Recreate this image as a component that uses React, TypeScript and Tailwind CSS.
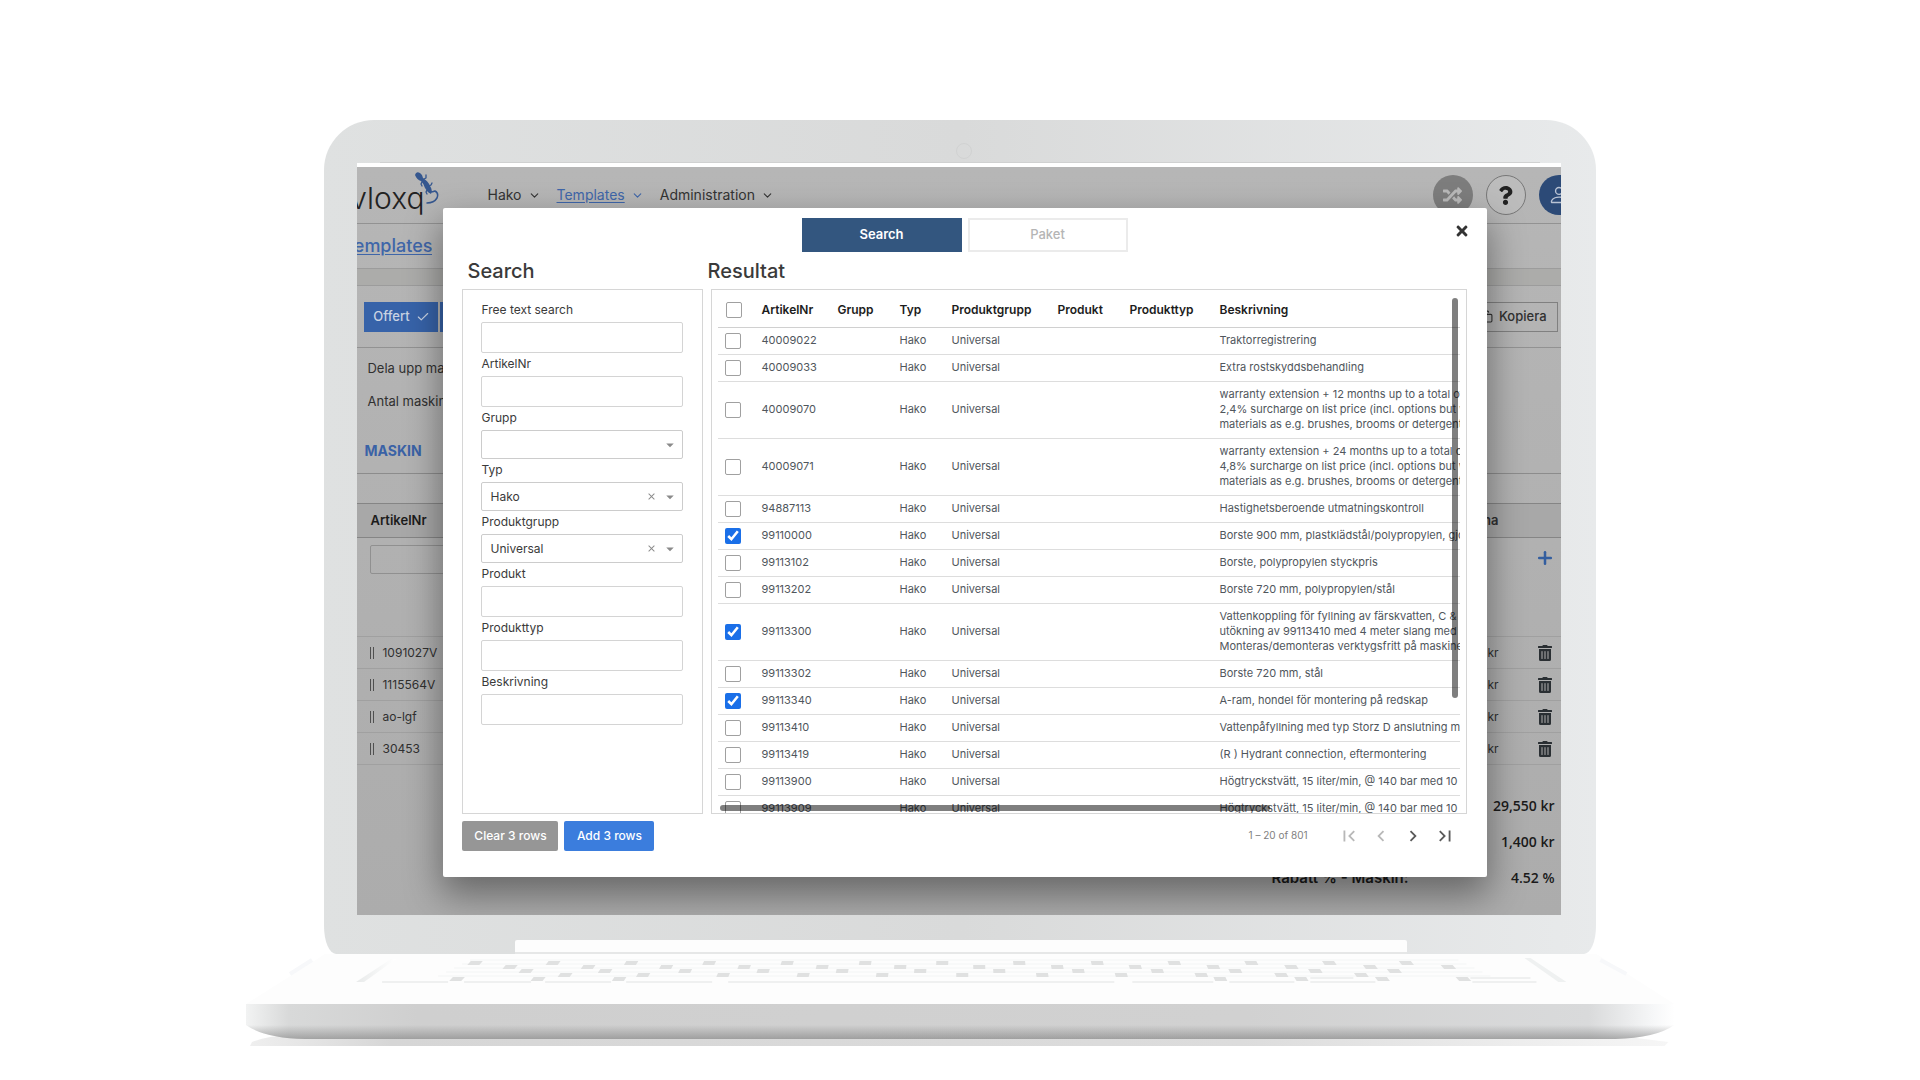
import { useState } from "react";
import type { ReactNode } from "react";
import { Check, ChevronDown, Copy, Plus } from "lucide-react";
import { FaQuestion, FaRandom, FaTimes, FaTrashAlt } from "react-icons/fa";
import { BsPerson } from "react-icons/bs";
import { MdArrowDropDown, MdChevronLeft, MdChevronRight, MdClose, MdFirstPage, MdLastPage } from "react-icons/md";

type Article = { nr: string; text: string[] };

const articles: Article[] = [
  { nr: "40009022", text: ["Traktorregistrering"] },
  { nr: "40009033", text: ["Extra rostskyddsbehandling"] },
  {
    nr: "40009070",
    text: [
      "warranty extension + 12 months up to a total of",
      "2,4% surcharge on list price (incl. options but w/o",
      "materials as e.g. brushes, brooms or detergents",
    ],
  },
  {
    nr: "40009071",
    text: [
      "warranty extension + 24 months up to a total of",
      "4,8% surcharge on list price (incl. options but w/o",
      "materials as e.g. brushes, brooms or detergents",
    ],
  },
  { nr: "94887113", text: ["Hastighetsberoende utmatningskontroll"] },
  { nr: "99110000", text: ["Borste 900 mm, plastklädstål/polypropylen, gjord"] },
  { nr: "99113102", text: ["Borste, polypropylen styckpris"] },
  { nr: "99113202", text: ["Borste 720 mm, polypropylen/stål"] },
  {
    nr: "99113300",
    text: [
      "Vattenkoppling för fyllning av färskvatten, C & D",
      "utökning av 99113410 med 4 meter slang med 2",
      "Monteras/demonteras verktygsfritt på maskinen",
    ],
  },
  { nr: "99113302", text: ["Borste 720 mm, stål"] },
  { nr: "99113340", text: ["A-ram, hondel för montering på redskap"] },
  { nr: "99113410", text: ["Vattenpåfyllning med typ Storz D anslutning med"] },
  { nr: "99113419", text: ["(R ) Hydrant connection, eftermontering"] },
  { nr: "99113900", text: ["Högtryckstvätt, 15 liter/min, @ 140 bar med 10 m"] },
  { nr: "99113909", text: ["Högtryckstvätt, 15 liter/min, @ 140 bar med 10 m"] },
];

const machineRows = ["1091027V", "1115564V", "ao-lgf", "30453"];

// Dark gaps between the keys, one list of x positions per keyboard row
const keyRows = [
  { y: 961, xs: [475, 553, 631, 709, 787, 865, 942, 1019, 1097, 1174, 1251, 1329, 1406] },
  { y: 965, xs: [510, 588, 666, 744, 822, 900, 979, 1057, 1135, 1213, 1291, 1370, 1448] },
  { y: 969, xs: [526, 605, 685, 763, 842, 920, 999, 1078, 1157, 1235, 1315, 1394] },
  { y: 973, xs: [565, 643, 723, 803, 882, 962, 1042, 1121, 1201, 1281, 1361] },
  { y: 977, xs: [457, 538, 619, 1220, 1301, 1382, 1463] },
];

function Gecko() {
  return (
    <svg viewBox="0 0 24 34" className="absolute right-0 top-0 h-[34px] w-6 text-[#35578f]" fill="none" stroke="currentColor" strokeLinecap="round" strokeLinejoin="round">
      <path d="M0 3 Q1 -1 5 1 Q8 3 8 6 Q13 9 15 14 Q18 18 16 22 Q12 20 10 16 Q9 12 6 9 Q2 8 0 3Z" fill="currentColor" stroke="none" />
      <path d="M15 20 Q18 20 20 19 Q24 21 22 26 Q19 31 12 31" strokeWidth="1.5" />
      <path d="M9 7 L11 6 L11 3 M7 10 L6 12 L7 14 M14 14 L16 13 L17 11 M12 18 L11 20 L12 22" strokeWidth="1.3" />
    </svg>
  );
}

function NavItem({ label, active }: { label: string; active?: boolean }) {
  return (
    <a href="#" className={active ? "flex items-center gap-1.5 text-[#3f66a9]" : "flex items-center gap-1.5 text-[#333333]"}>
      <span className={active ? "underline underline-offset-2" : ""}>{label}</span>
      <ChevronDown size={13} />
    </a>
  );
}

function TextField({ id, label }: { id: string; label: string }) {
  return (
    <div>
      <label htmlFor={id} className="block h-[23px] leading-[21px]">{label}</label>
      <input id={id} type="text" className="block h-[31px] w-full rounded-xs border border-[#d4d4d4] bg-white px-2 outline-none" />
    </div>
  );
}

function SelectField({ id, label, value }: { id: string; label: string; value?: string }) {
  return (
    <div>
      <label htmlFor={id} className="block h-[23px] leading-[21px]">{label}</label>
      <div className="relative">
        <select id={id} defaultValue={value ?? ""} className="block h-[29px] w-full appearance-none rounded-xs border border-[#cccccc] bg-white px-2 outline-none">
          <option value={value ?? ""}>{value ?? ""}</option>
        </select>
        <div className="pointer-events-none absolute inset-y-0 right-1 flex items-center gap-1 text-[#8a8a8a]">
          {value && <MdClose size={11} />}
          <MdArrowDropDown size={18} />
        </div>
      </div>
    </div>
  );
}

function Tick({ label, checked, onChange }: { label: string; checked: boolean; onChange: () => void }) {
  return (
    <input
      type="checkbox"
      aria-label={label}
      checked={checked}
      onChange={onChange}
      className="block size-4 appearance-none rounded-xs border border-[#a0a0a0] bg-white accent-[#1a6fe8] checked:appearance-auto"
    />
  );
}

function Th({ children }: { children?: ReactNode }) {
  return <th className="p-0 pt-1 text-left font-semibold text-[#1c1c1c]">{children}</th>;
}

function ResultTable({ selected, toggle }: { selected: string[]; toggle: (nr: string) => void }) {
  return (
    <div className="relative min-w-0 flex-1 overflow-hidden border border-[#d6d6d6] px-1.5">
      <div className="h-[523px] overflow-hidden">
        <table className="w-full table-fixed border-collapse whitespace-nowrap">
          <colgroup>
            <col className="w-[43px]" />
            <col className="w-[76px]" />
            <col className="w-[62px]" />
            <col className="w-[52px]" />
            <col className="w-[106px]" />
            <col className="w-[72px]" />
            <col className="w-[90px]" />
            <col />
          </colgroup>
          <thead>
            <tr className="h-[37px] border-b border-[#d0d0d0] text-xs">
              <th className="p-0 pl-2 pt-[3px]"><Tick label="Alla" checked={false} onChange={() => {}} /></th>
              <Th>ArtikelNr</Th>
              <Th>Grupp</Th>
              <Th>Typ</Th>
              <Th>Produktgrupp</Th>
              <Th>Produkt</Th>
              <Th>Produkttyp</Th>
              <Th>Beskrivning</Th>
            </tr>
          </thead>
          <tbody className="text-[11px] leading-[15px] text-[#50565c]">
            {articles.map((a) => (
              <tr key={a.nr} className={a.text.length > 1 ? "h-[57px] border-b border-[#dddddd]" : "h-[27px] border-b border-[#dddddd]"}>
                <td className="p-0 pl-[7px]">
                  <Tick label={a.nr} checked={selected.includes(a.nr)} onChange={() => toggle(a.nr)} />
                </td>
                <td className="p-0">{a.nr}</td>
                <td className="p-0" />
                <td className="p-0">Hako</td>
                <td className="p-0">Universal</td>
                <td className="p-0" />
                <td className="p-0" />
                <td className="overflow-hidden p-0">
                  {a.text.map((line) => <div key={line}>{line}</div>)}
                </td>
              </tr>
            ))}
          </tbody>
        </table>
      </div>
      {/* overlay scrollbars */}
      <div className="absolute right-2 top-2 h-[400px] w-1.5 rounded-full bg-black/50" />
      <div className="absolute bottom-0.5 left-2 h-1.5 w-[73%] rounded-full bg-black/50" />
    </div>
  );
}

function ArticleDialog() {
  const [selected, setSelected] = useState(["99110000", "99113300", "99113340"]);
  const toggle = (nr: string) =>
    setSelected((old) => (old.includes(nr) ? old.filter((n) => n !== nr) : [...old, nr]));

  return (
    <div role="dialog" className="relative w-full rounded-xs bg-white pb-[26px] pl-[19px] pr-5 pt-2.5 text-xs text-[#3a3a3a] shadow-[0_16px_36px_2px_rgba(0,0,0,0.4)]">
      <button aria-label="Close" className="absolute right-[17px] top-[15px] text-[#333333]">
        <FaTimes size={16} />
      </button>

      <div className="flex justify-center gap-1.5">
        <button className="h-[34px] w-40 bg-[#33567f] text-[13px] font-semibold text-white">Search</button>
        <button className="h-[34px] w-40 border-2 border-[#ebebeb] bg-white text-[13px] font-medium text-[#b5b5b5]">Paket</button>
      </div>

      <div className="flex h-[37px] items-center text-xl font-medium">
        <h2 className="w-[245px] pl-[5px]">Search</h2>
        <h2>Resultat</h2>
      </div>

      <div className="flex gap-2">
        <form className="w-[241px] shrink-0 border border-[#d6d6d6] pl-[18px] pr-[19px] pt-[9px]">
          <TextField id="free" label="Free text search" />
          <TextField id="nr" label="ArtikelNr" />
          <SelectField id="grupp" label="Grupp" />
          <SelectField id="typ" label="Typ" value="Hako" />
          <SelectField id="pgrupp" label="Produktgrupp" value="Universal" />
          <TextField id="produkt" label="Produkt" />
          <TextField id="ptyp" label="Produkttyp" />
          <TextField id="beskr" label="Beskrivning" />
        </form>
        <ResultTable selected={selected} toggle={toggle} />
      </div>

      <div className="flex items-center gap-1.5 pt-[7px]">
        <button className="h-[30px] w-24 rounded-xs bg-[#969696] font-medium text-white" onClick={() => setSelected([])}>
          Clear {selected.length} rows
        </button>
        <button className="h-[30px] w-[90px] rounded-xs bg-[#3b7ddd] font-medium text-white">Add {selected.length} rows</button>
        <div className="ml-auto flex items-center pr-[11px] text-[#5a5a5a]">
          <span className="mr-[30px] text-[10px] text-[#808080]">1 – 20 of 801</span>
          <div className="flex gap-2.5">
            <button aria-label="First page" className="text-[#b8b8b8]"><MdFirstPage size={22} /></button>
            <button aria-label="Previous page" className="text-[#b8b8b8]"><MdChevronLeft size={22} /></button>
            <button aria-label="Next page"><MdChevronRight size={22} /></button>
            <button aria-label="Last page"><MdLastPage size={22} /></button>
          </div>
        </div>
      </div>
    </div>
  );
}

// The quote page that lies dimmed behind the dialog
function QuotePage() {
  return (
    <div className="bg-linear-to-b from-[#b6b6b6] to-[#acacac] text-[13px] text-[#303030]">
      <header className="flex h-[57px] items-center overflow-hidden border-b border-[#929292]">
        <div className="relative h-[46px] w-[82px]">
          <div className="flex h-full w-[67px] justify-end overflow-hidden pt-1.5 text-[30px] font-light leading-[40px] text-[#222222]">
            <span>vloxq</span>
          </div>
          <Gecko />
        </div>
        <nav className="ml-12 flex gap-4 text-sm">
          <NavItem label="Hako" />
          <NavItem label="Templates" active />
          <NavItem label="Administration" />
        </nav>
        <div className="-mr-[18px] ml-auto flex gap-[13px]">
          <button aria-label="Switch" className="flex size-10 items-center justify-center rounded-full bg-[#7d7d7d] text-[#b9b9b9]"><FaRandom size={19} /></button>
          <button aria-label="Help" className="flex size-10 items-center justify-center rounded-full border border-[#777777] bg-[#bcbcbc] text-[#222222]"><FaQuestion size={19} /></button>
          <button aria-label="Account" className="flex size-10 items-center justify-center rounded-full bg-[#2c4a77] text-[#b9c3d4]"><BsPerson size={22} /></button>
        </div>
      </header>
      <div className="flex h-[44px] w-[75px] items-center justify-end overflow-hidden text-lg font-medium text-[#3f66a9] underline underline-offset-2">
        <a href="#">Templates</a>
      </div>
      <div className="h-[18px] border-y border-[#9c9c9c] bg-[#acacaa]" />
      <div className="flex h-[62px] items-center justify-between border-b border-[#929292] pl-[7px] pr-[3px]">
        <div className="flex gap-0.5">
          <button className="flex h-[30px] w-[74px] items-center justify-center gap-1.5 bg-[#3763a9] font-medium text-[#c9d3e3]">Offert <Check size={14} /></button>
          <button className="h-[30px] w-[73px] bg-[#3763a9] text-[#c9d3e3]" aria-label="Order" />
        </div>
        <button className="flex h-[30px] items-center gap-1.5 border border-[#808080] px-2.5 font-medium"><Copy size={13} /> Kopiera</button>
      </div>
      <div className="h-[126px] border-b border-[#8c8c8c] pl-2.5 pt-1 leading-[33px]">
        <p>Dela upp maskin</p>
        <p>Antal maskiner</p>
        <h3 className="-ml-[3px] pt-4 text-sm font-bold leading-[33px] text-[#3a62a6]">MASKIN</h3>
      </div>
      <div className="h-[29px]" />
      <table className="w-full border-collapse border-b border-[#858585]">
        <thead>
          <tr className="h-[34px] border-y border-[#858585] bg-[#a8a8a8]">
            <th className="p-0 pl-[13px] text-left font-semibold text-[#1c1c1c]">ArtikelNr</th>
            <th className="w-32 p-0 pr-[30px] text-right font-semibold">Summa</th>
            <th className="w-8 p-0" />
          </tr>
        </thead>
        <tbody>
          <tr className="h-[99px] border-b border-[#a0a0a0] align-top">
            <td className="p-0 pl-[13px] pt-[7px]"><input aria-label="Filter" className="block h-[29px] w-36 rounded-xs border border-[#909090]" /></td>
            <td />
            <td className="p-0 pl-1.5 pt-2.5"><button aria-label="Add row" className="block text-[#335e9f]"><Plus size={20} strokeWidth={3} /></button></td>
          </tr>
          {machineRows.map((nr) => (
            <tr key={nr} className="h-8 border-b border-[#a0a0a0] text-xs">
              <td className="p-0 pl-[13px]">
                <div className="flex items-center gap-2">
                  <span className="h-3 w-1 border-x border-[#505050]" />
                  {nr}
                </div>
              </td>
              <td className="p-0 pr-[30px] text-right">kr</td>
              <td className="p-0 pl-2"><button aria-label="Delete" className="block text-[#2a2f33]"><FaTrashAlt size={16} /></button></td>
            </tr>
          ))}
        </tbody>
      </table>
      <dl className="ml-auto grid w-[289px] grid-cols-2 pb-[19px] pr-1.5 pt-[23px] text-[15px] font-semibold leading-9 text-[#1b1b1b]">
        <dt>Pris:</dt>
        <dd className="text-right font-['Open_Sans',sans-serif] text-sm leading-9">29,550 kr</dd>
        <dt>Rabatt:</dt>
        <dd className="text-right font-['Open_Sans',sans-serif] text-sm leading-9">1,400 kr</dd>
        <dt className="whitespace-nowrap">Rabatt % - Maskin:</dt>
        <dd className="text-right font-['Open_Sans',sans-serif] text-sm leading-9">4.52 %</dd>
      </dl>
    </div>
  );
}

function LaptopBase() {
  return (
    <svg viewBox="246 954 1428 94" preserveAspectRatio="none" className="block h-[94px] w-full">
      <defs>
        <linearGradient id="front" x1="0" x2="1" y1="0" y2="0">
          <stop offset="0" stopColor="#f2f3f3" />
          <stop offset="0.03" stopColor="#d8d9d9" />
          <stop offset="0.12" stopColor="#cfcfcf" />
          <stop offset="0.7" stopColor="#d1d1d1" />
          <stop offset="0.94" stopColor="#d9dadb" />
          <stop offset="0.985" stopColor="#f6f7f8" />
          <stop offset="1" stopColor="#ffffff" />
        </linearGradient>
        <linearGradient id="under" x1="0" x2="0" y1="0" y2="1">
          <stop offset="0" stopColor="#777777" stopOpacity="0" />
          <stop offset="1" stopColor="#777777" stopOpacity="0.55" />
        </linearGradient>
        <linearGradient id="floor" x1="0" x2="1" y1="0" y2="0">
          <stop offset="0" stopColor="#efefef" />
          <stop offset="0.1" stopColor="#d6d6d6" />
          <stop offset="0.7" stopColor="#dcdcdc" />
          <stop offset="1" stopColor="#f6f6f6" />
        </linearGradient>
        <linearGradient id="groove" x1="0" x2="1" y1="0" y2="0">
          <stop offset="0" stopColor="#e8eaea" />
          <stop offset="1" stopColor="#ffffff" />
        </linearGradient>
      </defs>
      <path d="M325 954 H1596 L1674 1004 H246Z" fill="#fdfdfd" />
      <path d="M391 959 L356 982 H364 L396 959Z" fill="url(#groove)" />
      <path d="M1524 958 L1558 982 H1566 L1530 958Z" fill="#eff1f1" />
      <path d="M312 960 L290 974 M1600 960 L1626 974" stroke="#f7f8fa" strokeWidth="4" />
      {[960, 964, 968, 972, 976].map((y) => (
        <path key={y} d={`M${470 - (y - 960) * 2} ${y} H${1458 + (y - 960) * 2}`} stroke="#f4f5f5" />
      ))}
      {keyRows.map((row) =>
        row.xs.map((x) => {
          const lean = ((960 - x) / 550) * 4;
          return (
            <path key={`${row.y}-${x}`} d={`M${x - 6 + lean / 2} ${row.y} h12 l${-lean} 4 h-12Z`} fill="#e0e1e1" />
          );
        })
      )}
      <path d="M382 982 H448 M464 982 H531 M545 982 H611 M626 982 H712 M728 982 H1114 M1132 982 H1213 M1229 982 H1294 M1310 982 H1375 M1472 982 H1536 M1310 978 H1353 M1470 978 H1530" stroke="#e2e3e3" />
      <path d="M252 1042 Q272 1034 300 1036 H1620 L1668 1042 L1664 1046 H250Z" fill="url(#floor)" />
      <path d="M246 1004 H1674 V1025 Q1656 1038 1615 1039 H305 Q264 1038 246 1025Z" fill="url(#front)" />
      <path d="M246 1025 H1674 Q1656 1038 1615 1039 H305 Q264 1038 246 1025Z" fill="url(#under)" />
    </svg>
  );
}

export default function App() {
  return (
    <main className="flex min-h-screen flex-col items-center bg-white pt-[120px] font-['Inter','Liberation_Sans',sans-serif]">
      <div className="w-[66.2%] rounded-t-[50px] bg-linear-to-r from-[#dfe1e1] via-[#d9dada] to-[#e8eaeb] [border-bottom-left-radius:12px_28px] [border-bottom-right-radius:12px_28px]">
        <div className="mx-[56px] flex h-[43px] items-end justify-center border-b border-[#d0d1d1] pb-[3px] pl-2">
          <span className="size-4 rounded-full border border-[#d1d2d2]" />
        </div>
        <div className="relative ml-[33px] mr-[35px] overflow-hidden border-t-4 border-white">
          <QuotePage />
          <div className="absolute inset-0 pl-[86px] pr-[74px] pt-[41px]">
            <ArticleDialog />
          </div>
        </div>
        <div className="ml-[15%] mt-[25px] h-[14px] w-[70.2%] rounded-t-xs border-b-2 border-[#e6e7e7] bg-[#fdfdfd]" />
      </div>
      <div className="w-[74.4%]">
        <LaptopBase />
      </div>
    </main>
  );
}
